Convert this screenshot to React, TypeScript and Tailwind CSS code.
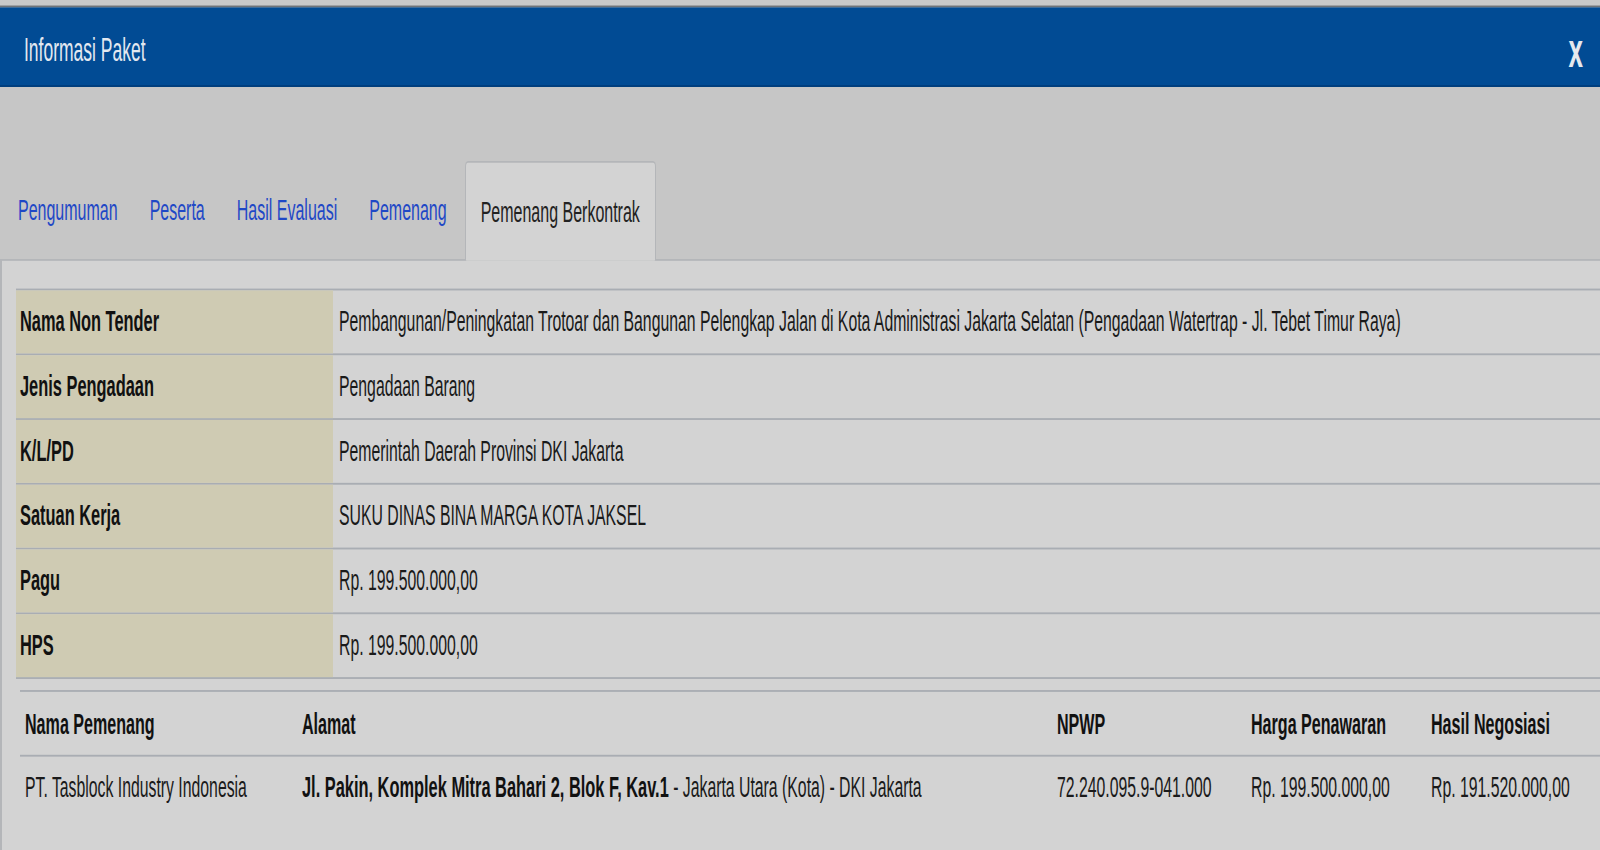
import React from 'react'

const font = { fontFamily: '"Liberation Sans", Arial, sans-serif' }

const infoRows: [string, string][] = [
  [
    'Nama Non Tender',
    'Pembangunan/Peningkatan Trotoar dan Bangunan Pelengkap Jalan di Kota Administrasi Jakarta Selatan (Pengadaan Watertrap - Jl. Tebet Timur Raya)',
  ],
  ['Jenis Pengadaan', 'Pengadaan Barang'],
  ['K/L/PD', 'Pemerintah Daerah Provinsi DKI Jakarta'],
  ['Satuan Kerja', 'SUKU DINAS BINA MARGA KOTA JAKSEL'],
  ['Pagu', 'Rp. 199.500.000,00'],
  ['HPS', 'Rp. 199.500.000,00'],
]

const tabs = ['Pengumuman', 'Peserta', 'Hasil Evaluasi', 'Pemenang']

export default function App() {
  return (
    <div className="w-[1600px] h-[850px] overflow-hidden bg-[#c6c6c6]" style={font}>
      {/* page is stretched vertically like the screenshot */}
      <div className="w-[1600px] h-[460px] origin-top scale-y-[1.85] flex flex-col">
        {/* top strip */}
        <div className="h-[2.5px] bg-[#c9c9c9]" />
        <div className="h-[1px] bg-[#6f7378]" />

        {/* header */}
        <div className="h-[43px] bg-[#014b94] border-b border-[#003d7c] flex items-center justify-between pl-[24px] pr-[17px] pt-[5px]">
          <span className="text-[17.5px] text-[#e3e8f0]">Informasi Paket</span>
          <span className="text-[26px] leading-none font-bold text-[#e6e9ee] -mt-[1px]">x</span>
        </div>

        {/* tabs */}
        <div className="mt-[39px] flex items-end pl-[2px] relative z-10">
          {tabs.map((t) => (
            <a key={t} className="px-4 h-[54px] pt-[3px] flex items-center text-[16px] text-[#1f48c6] cursor-pointer">
              {t}
            </a>
          ))}
          <div className="ml-[2px] px-[15px] h-[54px] pt-[1px] flex items-center text-[16px] text-[#222] bg-[#d3d3d3] border border-b-0 border-[#b4b6b9] rounded-t-[3px] -mb-px">
            Pemenang Berkontrak
          </div>
        </div>

        {/* panel */}
        <div className="flex-1 bg-[#d3d3d3] border-t border-l-2 border-[#b4b6b9] pt-[15px] pl-[14px]">
          <div className="border-t border-[#a9adb3]">
            {infoRows.map(([label, value]) => (
              <div key={label} className="flex h-[35px] border-b border-[#a9adb3]">
                <div className="w-[317px] shrink-0 bg-[#cfcbb3] flex items-center pl-[4px] text-[16.4px] font-bold text-[#111]">
                  {label}
                </div>
                <div className="flex-1 flex items-center pl-[6px] text-[15.8px] text-[#1a1a1a] whitespace-nowrap">
                  {value}
                </div>
              </div>
            ))}
          </div>

          <div className="mt-[6.5px] ml-[4px] border-t border-[#a9adb3]">
            <div className="grid grid-cols-[277px_755px_194px_180px_1fr] h-[34.5px] border-b border-[#a9adb3] items-center text-[16.1px] font-bold text-[#111]">
              <div className="pl-[5px]">Nama Pemenang</div>
              <div className="pl-[5px]">Alamat</div>
              <div className="pl-[5px]">NPWP</div>
              <div className="pl-[5px]">Harga Penawaran</div>
              <div className="pl-[5px]">Hasil Negosiasi</div>
            </div>
            <div className="grid grid-cols-[277px_755px_194px_180px_1fr] h-[34px] items-center text-[15.8px] text-[#1a1a1a] whitespace-nowrap">
              <div className="pl-[5px]">PT. Tasblock Industry Indonesia</div>
              <div className="pl-[5px]">
                <span className="font-bold text-[16.4px] text-[#111]">Jl. Pakin, Komplek Mitra Bahari 2, Blok F, Kav.1</span>
                {' - Jakarta Utara (Kota) - DKI Jakarta'}
              </div>
              <div className="pl-[5px]">72.240.095.9-041.000</div>
              <div className="pl-[5px]">Rp. 199.500.000,00</div>
              <div className="pl-[5px]">Rp. 191.520.000,00</div>
            </div>
          </div>
        </div>
      </div>
    </div>
  )
}
